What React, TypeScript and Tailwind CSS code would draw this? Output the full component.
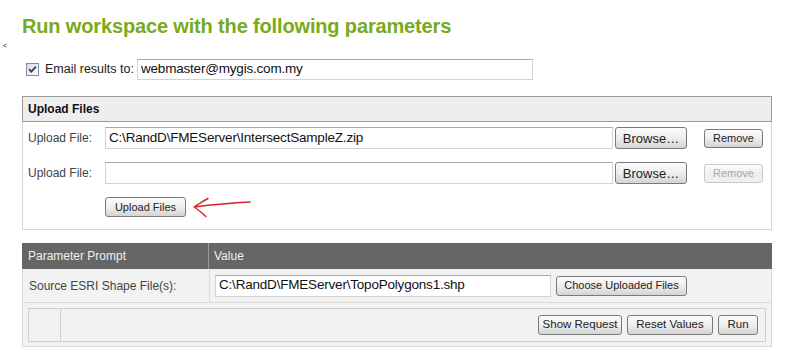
import type { ReactNode } from "react";

const font = { fontFamily: '"Liberation Sans", Arial, sans-serif' };

function Btn({ children, className = "", disabled = false }: { children: ReactNode; className?: string; disabled?: boolean }) {
  return (
    <button
      className={`flex shrink-0 items-center justify-center whitespace-nowrap rounded-[3px] border bg-gradient-to-b from-[#fbfbfb] via-[#eeeeee] to-[#d4d4d4] leading-none ${
        disabled ? "border-[#c8c8c8] text-[#a8a8a8] from-[#fdfdfd] to-[#f0f0f0]" : "border-[#7a7a7a] text-[#222]"
      } ${className}`}
    >
      {children}
    </button>
  );
}

function TextBox({ value = "", className = "" }: { value?: string; className?: string }) {
  return (
    <div
      className={`flex shrink-0 items-center whitespace-nowrap border border-[#d2d2d2] border-t-[#a8a8a8] bg-white pl-[3px] text-[13.5px] tracking-[-0.2px] text-[#111] ${className}`}
    >
      {value}
    </div>
  );
}

function RedArrow() {
  return (
    <svg width="64" height="22" viewBox="0 0 64 22" className="ml-[4px]">
      <path
        d="M4 11 C 20 9, 40 7, 60 6 M4 11 C 9 8, 13 5, 18 2.5 M4 11 C 9 14, 13 18, 16 20.5"
        fill="none"
        stroke="#d3232a"
        strokeWidth="1.4"
        strokeLinecap="round"
      />
    </svg>
  );
}

export default function App() {
  return (
    <div className="w-[792px] h-[363px] bg-white overflow-hidden" style={font}>
      <h1 className="pt-[14px] pl-[22px] text-[20px] leading-[24px] font-bold tracking-[-0.15px] text-[#78aa1c]">
        Run workspace with the following parameters
      </h1>
      <div className="h-[12px] pl-[3px] pt-[4px] text-[7px] leading-none text-black">&lt;</div>

      {/* Email row */}
      <div className="mt-[9px] flex h-[21px] items-center pl-[26px]">
        <svg width="13" height="13" viewBox="0 0 13 13" className="shrink-0">
          <defs>
            <linearGradient id="cb" x1="0" y1="0" x2="1" y2="1">
              <stop offset="0" stopColor="#dcdcdc" />
              <stop offset="1" stopColor="#ffffff" />
            </linearGradient>
          </defs>
          <rect x="0.5" y="0.5" width="12" height="12" fill="url(#cb)" stroke="#7d8ea8" />
          <path d="M3 6.2 L5.3 8.6 L10 3.6" fill="none" stroke="#2f3f6a" strokeWidth="1.8" />
        </svg>
        <span className="ml-[6px] w-[92px] shrink-0 whitespace-nowrap text-[12.5px] text-[#222]">Email results to:</span>
        <TextBox value="webmaster@mygis.com.my" className="w-[396px] h-[21px]" />
      </div>

      {/* Upload Files panel */}
      <div className="ml-[22px] mt-[16px] w-[750px]">
        <div className="flex h-[26px] items-center border border-[#9a9a9a] bg-[#eeeeee] pl-[5px] text-[12px] font-bold text-[#111]">
          Upload Files
        </div>
        <div className="h-[108px] border-x border-b border-[#d6d6d6] pt-[5px]">
          <div className="flex h-[22px] items-center pl-[5px]">
            <span className="w-[77px] text-[12px] text-[#444]">Upload File:</span>
            <TextBox value="C:\RandD\FMEServer\IntersectSampleZ.zip" className="w-[508px] h-[22px]" />
            <Btn className="ml-[2px] w-[72px] h-[22px] text-[13px]">Browse…</Btn>
            <Btn className="ml-[17px] w-[59px] h-[19px] text-[11px]">Remove</Btn>
          </div>
          <div className="mt-[13px] flex h-[22px] items-center pl-[5px]">
            <span className="w-[77px] text-[12px] text-[#444]">Upload File:</span>
            <TextBox className="w-[508px] h-[22px]" />
            <Btn className="ml-[2px] w-[72px] h-[22px] text-[13px]">Browse…</Btn>
            <Btn disabled className="ml-[17px] w-[59px] h-[19px] text-[11px]">Remove</Btn>
          </div>
          <div className="mt-[12px] flex items-center pl-[82px]">
            <Btn className="w-[81px] h-[20px] text-[11px]">Upload Files</Btn>
            <RedArrow />
          </div>
        </div>
      </div>

      {/* Parameters table */}
      <div className="ml-[22px] mt-[13px] w-[750px]">
        <div className="flex h-[26px] bg-[#666666] text-[12px] text-[#f0f0f0]">
          <div className="flex w-[187px] items-center border-r border-[#9a9a9a] pl-[6px]">Parameter Prompt</div>
          <div className="flex items-center pl-[5px]">Value</div>
        </div>
        <div className="border-x border-b border-[#dadada] bg-[#f2f2f2]">
          <div className="flex h-[34px] border-b border-[#dadada]">
            <div className="flex w-[187px] items-center border-r border-[#dadada] pl-[6px] text-[12px] text-[#444]">
              Source ESRI Shape File(s):
            </div>
            <div className="flex items-center pl-[5px]">
              <TextBox value="C:\RandD\FMEServer\TopoPolygons1.shp" className="w-[336px] h-[22px]" />
              <Btn className="ml-[5px] w-[131px] h-[20px] text-[11px]">Choose Uploaded Files</Btn>
            </div>
          </div>
          <div className="px-[5px] pt-[5px] pb-[4px]">
            <div className="flex h-[34px] items-center border border-[#cfcfcf]">
              <div className="h-full w-[32px] border-r border-[#cfcfcf]" />
              <div className="ml-auto mr-[7px] flex gap-[5px]">
                <Btn className="w-[84px] h-[20px] text-[11.5px]">Show Request</Btn>
                <Btn className="w-[86px] h-[20px] text-[11.5px]">Reset Values</Btn>
                <Btn className="w-[40px] h-[20px] text-[11.5px]">Run</Btn>
              </div>
            </div>
          </div>
        </div>
      </div>
    </div>
  );
}
